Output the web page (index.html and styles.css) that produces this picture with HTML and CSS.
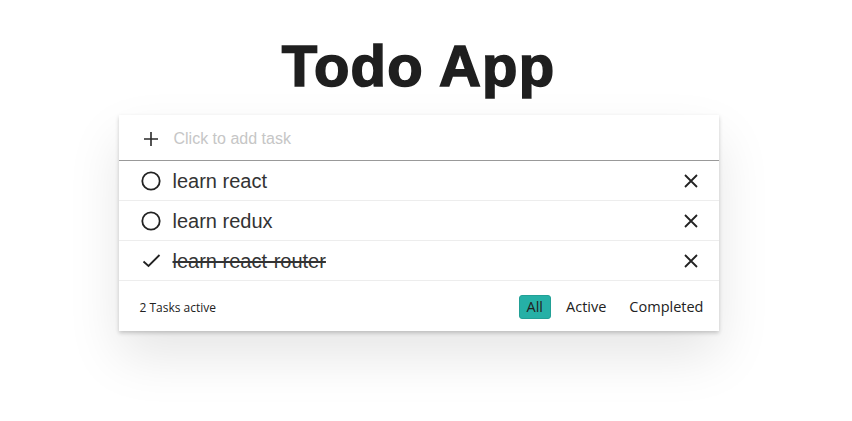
FILE: index.html
```html
<!DOCTYPE html>
<html lang="en">
<head>
<meta charset="utf-8">
<title>Todo App</title>
<link rel="stylesheet" href="styles.css">
</head>
<body>
<div class="page">
  <h1 class="title">Todo App</h1>
  <section class="card">
    <div class="add-row">
      <svg class="plus" width="14" height="14" viewBox="0 0 14 14"><path d="M7 0V14M0 7H14" stroke="#2a2a2a" stroke-width="1.6" fill="none"/></svg>
      <span class="placeholder">Click to add task</span>
    </div>
    <ul class="list">
      <li class="item">
        <svg class="state" width="20" height="20" viewBox="0 0 20 20"><circle cx="10" cy="10" r="8.7" stroke="#222" stroke-width="1.8" fill="none"/></svg>
        <span class="label">learn react</span>
        <svg class="remove" width="14" height="14" viewBox="0 0 14 14"><path d="M1 1L13 13M13 1L1 13" stroke="#222" stroke-width="1.8" fill="none"/></svg>
      </li>
      <li class="item">
        <svg class="state" width="20" height="20" viewBox="0 0 20 20"><circle cx="10" cy="10" r="8.7" stroke="#222" stroke-width="1.8" fill="none"/></svg>
        <span class="label">learn redux</span>
        <svg class="remove" width="14" height="14" viewBox="0 0 14 14"><path d="M1 1L13 13M13 1L1 13" stroke="#222" stroke-width="1.8" fill="none"/></svg>
      </li>
      <li class="item done">
        <svg class="state" width="20" height="20" viewBox="0 0 20 20"><path d="M2.5 10.5L7.5 15L18.5 4" stroke="#222" stroke-width="1.8" fill="none"/></svg>
        <span class="label">learn react-router</span>
        <svg class="remove" width="14" height="14" viewBox="0 0 14 14"><path d="M1 1L13 13M13 1L1 13" stroke="#222" stroke-width="1.8" fill="none"/></svg>
      </li>
    </ul>
    <footer class="footer">
      <span class="count">2 Tasks active</span>
      <nav class="filters">
        <span class="filter selected">All</span>
        <span class="filter">Active</span>
        <span class="filter">Completed</span>
      </nav>
    </footer>
  </section>
</div>
</body>
</html>
```
FILE: styles.css
```css
html, body {
  margin: 0;
  padding: 0;
  background: #fff;
}
body {
  min-height: 100vh;
  font-family: "Liberation Sans", Arial, sans-serif;
  color: #333;
}
.page {
  display: flex;
  flex-direction: column;
  align-items: center;
  padding-right: 15px;
  padding-top: 30px;
}
.title {
  margin: 0 0 13px;
  font-size: 58px;
  line-height: 72px;
  font-weight: 700;
  color: #1f1f1f;
  -webkit-text-stroke: 1.6px #1f1f1f;
  letter-spacing: 1.2px;
}
.card {
  width: 600px;
  background: #fff;
  box-shadow: 0 2px 4px 0 rgba(0,0,0,0.2), 0 25px 50px 0 rgba(0,0,0,0.1);
}
.add-row {
  display: flex;
  align-items: center;
  height: 46px;
  padding-left: 25px;
  padding-top: 2px;
  border-bottom: 1px solid #999;
  box-sizing: border-box;
}
.plus {
  flex: none;
  margin-right: 16px;
}
.placeholder {
  font-size: 16px;
  color: #c6c6c6;
}
.list {
  list-style: none;
  margin: 0;
  padding: 0;
}
.item {
  display: flex;
  align-items: center;
  height: 40px;
  box-sizing: border-box;
  padding: 1px 21px 0 22px;
  border-bottom: 1px solid #ededed;
}
.state {
  flex: none;
  margin-right: 12px;
}
.label {
  flex: 1;
  font-size: 20px;
  color: #333;
}
.done .label {
  text-decoration: line-through;
  text-decoration-thickness: 2px;
}
.remove {
  flex: none;
}
.footer {
  display: flex;
  align-items: center;
  justify-content: space-between;
  height: 50px;
  padding: 2px 7px 0 21px;
  box-sizing: border-box;
  font-family: "Open Sans", "Noto Sans", sans-serif;
  color: #222;
}
.count {
  font-size: 12px;
}
.filters {
  display: flex;
  align-items: center;
  gap: 7px;
}
.filter {
  font-size: 14.5px;
  padding: 1px 7px;
  line-height: 20px;
  border-radius: 3px;
  border: 1px solid transparent;
}
.filter.selected {
  background: #26b0a6;
  border-color: #22a096;
}
```
